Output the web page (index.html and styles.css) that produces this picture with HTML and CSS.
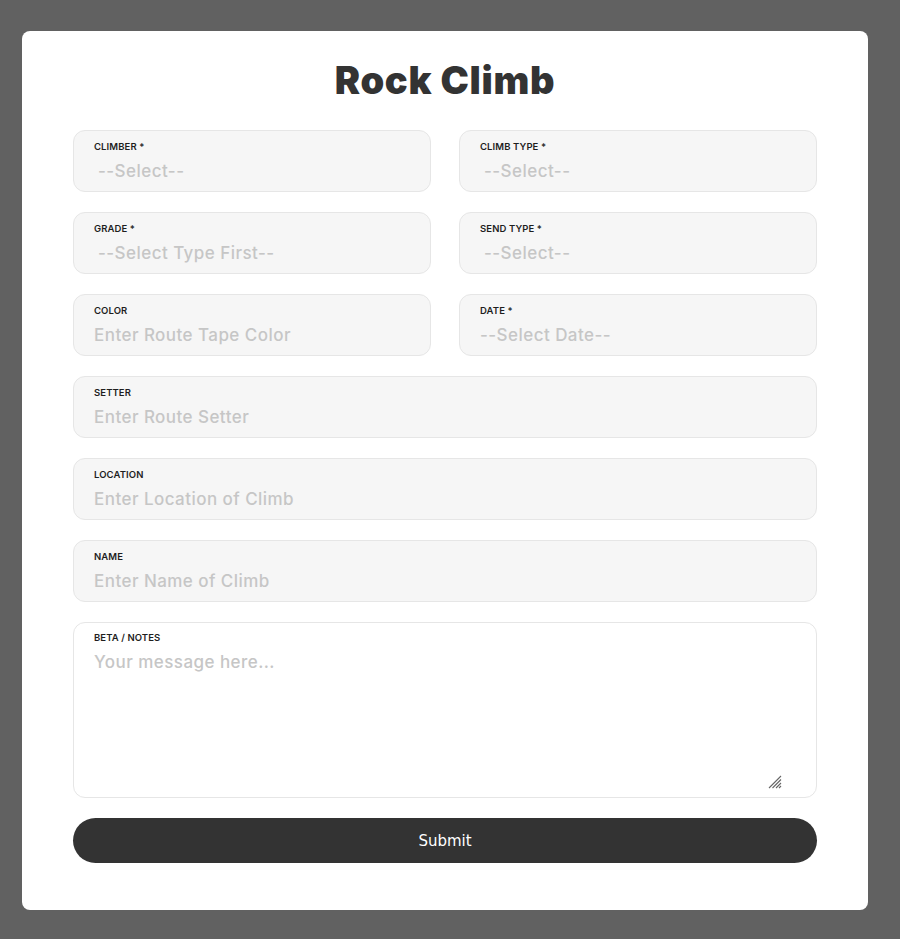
FILE: index.html
```html
<!DOCTYPE html>
<html lang="en">
<head>
<meta charset="utf-8">
<title>Rock Climb</title>
<link rel="stylesheet" href="styles.css">
</head>
<body>
<main class="card">
  <h1 class="title">Rock Climb</h1>
  <form class="form">
    <div class="row">
      <div class="field">
        <label class="label">CLIMBER *</label>
        <select class="control select"><option>--Select--</option></select>
      </div>
      <div class="field">
        <label class="label">CLIMB TYPE *</label>
        <select class="control select"><option>--Select--</option></select>
      </div>
    </div>
    <div class="row">
      <div class="field">
        <label class="label">GRADE *</label>
        <select class="control select"><option>--Select Type First--</option></select>
      </div>
      <div class="field">
        <label class="label">SEND TYPE *</label>
        <select class="control select"><option>--Select--</option></select>
      </div>
    </div>
    <div class="row">
      <div class="field">
        <label class="label">COLOR</label>
        <input class="control" type="text" placeholder="Enter Route Tape Color">
      </div>
      <div class="field">
        <label class="label">DATE *</label>
        <input class="control" type="text" placeholder="--Select Date--">
      </div>
    </div>
    <div class="field">
      <label class="label">SETTER</label>
      <input class="control" type="text" placeholder="Enter Route Setter">
    </div>
    <div class="field">
      <label class="label">LOCATION</label>
      <input class="control" type="text" placeholder="Enter Location of Climb">
    </div>
    <div class="field">
      <label class="label">NAME</label>
      <input class="control" type="text" placeholder="Enter Name of Climb">
    </div>
    <div class="field field-notes">
      <label class="label">BETA / NOTES</label>
      <textarea class="control notes" placeholder="Your message here..."></textarea>
      <svg class="grip" width="14" height="14" viewBox="0 0 14 14" aria-hidden="true">
        <path d="M1 13 L13 1 M4.5 13 L13 4.5 M8 13 L13 8 M11 13 L13 11" stroke="#666" stroke-width="1.1" fill="none"/>
      </svg>
    </div>
    <button class="submit" type="button">Submit</button>
  </form>
</main>
</body>
</html>
```

FILE: styles.css
```css
html, body {
  margin: 0;
  padding: 0;
  background: #616161;
}
body {
  padding: 31px 32px 29px 22px;
  font-family: Inter, "Open Sans", sans-serif;
}
.card {
  background: #fff;
  border-radius: 8px;
  padding: 28px 51px 47px;
  box-sizing: border-box;
  width: 846px;
}
.title {
  margin: 0 0 28px;
  text-align: center;
  font-size: 38px;
  line-height: 43px;
  font-weight: 900;
  color: #333;
  letter-spacing: 0.7px;
}
.form {
  display: flex;
  flex-direction: column;
  gap: 20px;
}
.row {
  display: grid;
  grid-template-columns: 1fr 1fr;
  gap: 28px;
}
.field {
  box-sizing: border-box;
  height: 62px;
  background: #f6f6f6;
  border: 1px solid #e6e6e6;
  border-radius: 12px;
  padding: 9px 20px 0;
  display: flex;
  flex-direction: column;
}
.label {
  font-size: 9.5px;
  line-height: 14px;
  font-weight: 600;
  color: #1e1e1e;
  letter-spacing: 0.1px;
}
.control {
  margin-top: 5px;
  border: none;
  background: transparent;
  font-family: Inter, "Open Sans", sans-serif;
  font-size: 17px;
  line-height: 24px;
  height: 24px;
  padding: 0;
  color: #c6c6c6;
  outline: none;
  font-weight: 500;
  letter-spacing: 0.45px;
}
.control::placeholder {
  color: #c6c6c6;
}
.select {
  appearance: none;
  -webkit-appearance: none;
  padding-left: 4px;
}
.field-notes {
  position: relative;
  height: 176px;
  background: #fff;
  padding-top: 8px;
}
.notes {
  flex: 1;
  resize: none;
  margin-bottom: 8px;
  height: auto;
}
.grip {
  position: absolute;
  right: 34px;
  bottom: 8px;
}
.submit {
  height: 45px;
  border: none;
  border-radius: 23px;
  background: #333;
  color: #fff;
  font-family: "DejaVu Sans", sans-serif;
  font-size: 15px;
  cursor: pointer;
}
```
